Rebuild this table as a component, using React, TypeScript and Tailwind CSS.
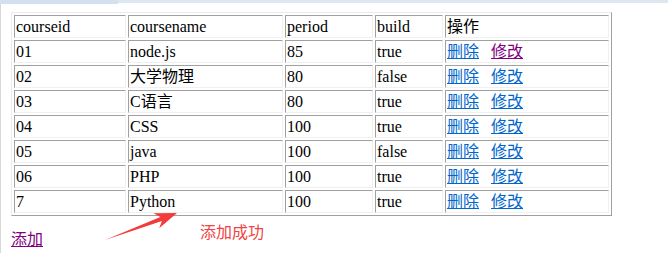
import React from 'react'

type Course = {
  id: string
  name: string
  period: string
  build: string
}

const courses: Course[] = [
  { id: '01', name: 'node.js', period: '85', build: 'true' },
  { id: '02', name: '大学物理', period: '80', build: 'false' },
  { id: '03', name: 'C语言', period: '80', build: 'true' },
  { id: '04', name: 'CSS', period: '100', build: 'true' },
  { id: '05', name: 'java', period: '100', build: 'false' },
  { id: '06', name: 'PHP', period: '100', build: 'true' },
  { id: '7', name: 'Python', period: '100', build: 'true' },
]

// inset look of a classic border="1" table cell
const cell =
  'h-[23px] px-px py-0 border border-solid border-t-[#a0a0a0] border-l-[#a0a0a0] border-b-[#f0f0f0] border-r-[#f0f0f0] align-middle text-left font-normal'

const App: React.FC = () => {
  return (
    <div
      className="relative w-[668px] h-[253px] overflow-hidden bg-white text-black text-[16px] leading-[18px]"
      style={{ fontFamily: '"Liberation Serif", "Noto Sans CJK SC", serif' }}
    >
      {/* top strip of the window frame */}
      <div className="flex h-[4px]">
        <div className="w-[118px] bg-[#d3e0ee]" />
        <div className="flex-1 h-[3px] bg-[#dde7f2]" />
      </div>

      <div className="flex">
        <div className="w-px bg-[#d8d8d8] h-[249px]" />
        <div className="ml-[10px] mt-[8px]">
          <table className="table-fixed w-[601px] border-separate border-spacing-[2px] border border-solid border-t-[#ebebeb] border-l-[#ebebeb] border-b-[#a0a0a0] border-r-[#a0a0a0]">
            <colgroup>
              <col className="w-[112px]" />
              <col className="w-[155px]" />
              <col className="w-[88px]" />
              <col className="w-[68px]" />
              <col className="w-[164px]" />
            </colgroup>
            <thead>
              <tr>
                <th className={cell}>courseid</th>
                <th className={cell}>coursename</th>
                <th className={cell}>period</th>
                <th className={cell}>build</th>
                <th className={cell}>操作</th>
              </tr>
            </thead>
            <tbody>
              {courses.map((c, i) => (
                <tr key={c.id}>
                  <td className={cell}>{c.id}</td>
                  <td className={cell}>{c.name}</td>
                  <td className={cell}>{c.period}</td>
                  <td className={cell}>{c.build}</td>
                  <td className={cell}>
                    <a href="#" className="text-[#0066cc] underline">
                      删除
                    </a>
                    <a
                      href="#"
                      className={`ml-[12px] underline ${
                        i === 0 ? 'text-[#800080]' : 'text-[#0066cc]'
                      }`}
                    >
                      修改
                    </a>
                  </td>
                </tr>
              ))}
            </tbody>
          </table>

          <div className="mt-[15px]">
            <a href="#" className="text-[#800080] underline">
              添加
            </a>
          </div>
        </div>
      </div>

      {/* annotation: arrow pointing at the new row */}
      <svg
        className="absolute left-0 top-0 pointer-events-none"
        width="668"
        height="253"
        viewBox="0 0 668 253"
      >
        <polygon
          points="105,240 160.3,216.9 153.6,213.2 177,213 159.2,228.2 161.9,221.1"
          fill="#f23c3c"
        />
      </svg>
      <span className="absolute left-[200px] top-[224px] text-[#f04444]">
        添加成功
      </span>
    </div>
  )
}

export default App
